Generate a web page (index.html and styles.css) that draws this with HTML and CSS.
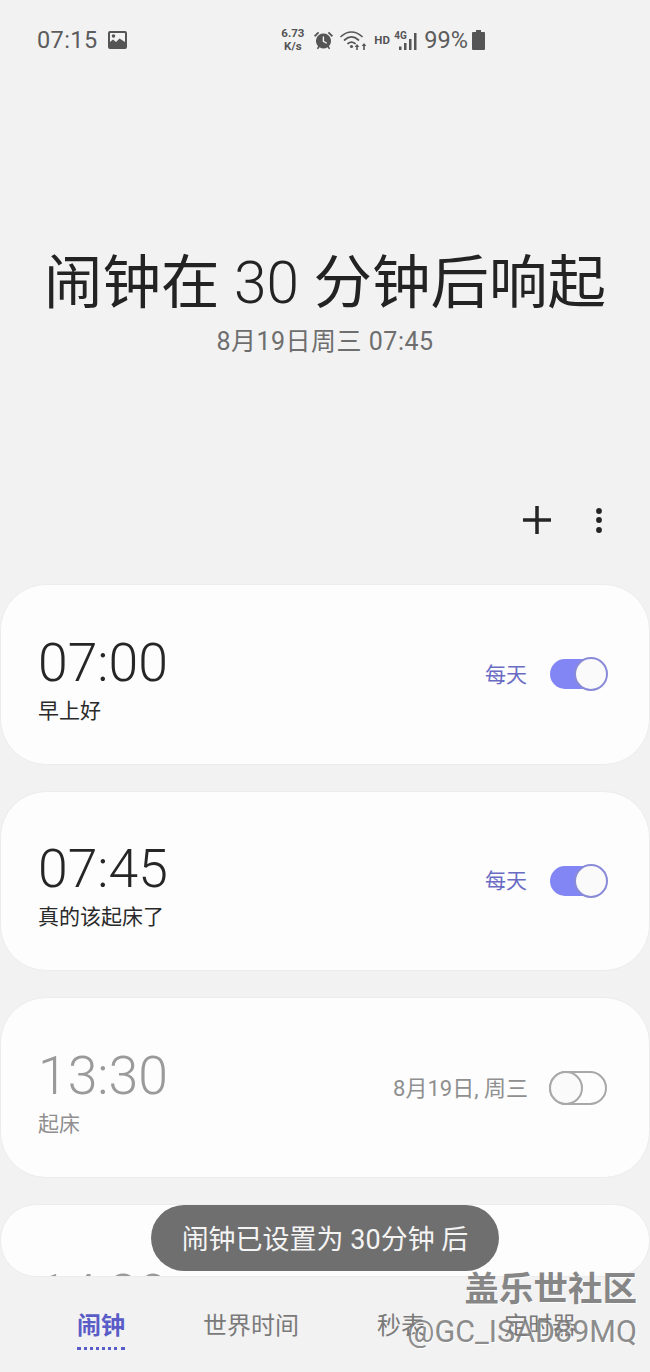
FILE: index.html
```html
<!DOCTYPE html>
<html lang="zh">
<head>
<meta charset="utf-8">
<title>闹钟</title>
<link rel="stylesheet" href="styles.css">
</head>
<body>
<div class="screen">
  <header class="status">
    <div class="status-left">
      <span class="clock">07:15</span>
      <svg class="ic-image" width="19" height="18" viewBox="0 0 19 18"><path fill="#555" fill-rule="evenodd" d="M2 0h15a2 2 0 0 1 2 2v14a2 2 0 0 1-2 2H2a2 2 0 0 1-2-2V2a2 2 0 0 1 2-2zm0 2v9l3-2.500 3 2.500 3.500-3.500L17 11V2H2zm3.500 1.200a1.800 1.800 0 1 1 0 3.600 1.800 1.800 0 0 1 0-3.600z"/></svg>
    </div>
    <div class="status-right">
      <span class="speed"><b>6.73</b><b>K/s</b></span>
      <svg class="ic-alarm" width="21" height="21" viewBox="0 0 21 21"><path fill="#555" fill-rule="evenodd" d="M10.500 3.500a7.500 7.500 0 0 1 5.400 12.700l1.300 2.300-1.300.8-1.400-2.100a7.500 7.500 0 0 1-8 0l-1.400 2.100-1.300-.8 1.300-2.300A7.500 7.500 0 0 1 10.500 3.500zM9.700 6.500v5.300l3.700 2 .7-1.100-3-1.700V6.500H9.700z"/><path fill="#555" d="M1 5.500 5 1.800l1.200 1.200L2.200 7zM20 5.500 16 1.800 14.800 3l4 4z"/></svg>
      <svg class="ic-wifi" width="27" height="21" viewBox="0 0 27 21"><g fill="none" stroke="#555" stroke-width="1.700" stroke-linecap="round"><path d="M1 6.500c6.500-6 14.500-6 21 0"/><path d="M4.500 10c4.500-4 9.500-4 14 0"/><path d="M8 13.500c2.500-2 4.500-2 7 0"/></g><circle cx="11.500" cy="16.500" r="1.600" fill="#555"/><path fill="#555" d="M17 14l2.300 3h-1.500v3h-1.600v-3h-1.500zM24 13l2.300 3h-1.500v4h-1.600v-4h-1.500z"/></svg>
      <span class="hd">HD</span>
      <span class="signal">
        <span class="net">4G</span>
        <svg width="18" height="21" viewBox="0 0 18 21"><path fill="#555" d="M0 16.500h2.500V20H0zM5 13h2.500v7H5zM10 9h2.500v11H10zM15 3h2.500v17H15z"/></svg>
      </span>
      <span class="battery-pct">99%</span>
      <svg class="ic-battery" width="13" height="20" viewBox="0 0 13 20"><path fill="#555" d="M4 0h5v2h3a1 1 0 0 1 1 1v16a1 1 0 0 1-1 1H1a1 1 0 0 1-1-1V3a1 1 0 0 1 1-1h3z"/></svg>
    </div>
  </header>

  <section class="hero">
    <h1 class="hero-title">闹钟在 <span class="hero-num">30</span> 分钟后响起</h1>
    <p class="hero-date">8月19日周三 07:45</p>
  </section>

  <div class="toolbar">
    <svg class="ic-plus" width="30" height="30" viewBox="0 0 30 30"><path d="M15 1v28M1 15h28" stroke="#252525" stroke-width="3.500" fill="none"/></svg>
    <svg class="ic-more" width="8" height="26" viewBox="0 0 8 26"><circle cx="4" cy="4" r="2.900" fill="#252525"/><circle cx="4" cy="13" r="2.900" fill="#252525"/><circle cx="4" cy="23" r="2.900" fill="#252525"/></svg>
  </div>

  <main class="list">
    <article class="card">
      <div class="info"><div class="time">07:00</div><div class="label">早上好</div></div>
      <span class="repeat">每天</span>
      <span class="switch on"><i class="knob"></i></span>
    </article>
    <article class="card">
      <div class="info"><div class="time">07:45</div><div class="label">真的该起床了</div></div>
      <span class="repeat">每天</span>
      <span class="switch on"><i class="knob"></i></span>
    </article>
    <article class="card off">
      <div class="info"><div class="time">13:30</div><div class="label">起床</div></div>
      <span class="repeat">8月19日, 周三</span>
      <span class="switch"><i class="knob"></i></span>
    </article>
    <article class="card off peek">
      <div class="info"><div class="time">14:30</div></div>
    </article>
  </main>

  <nav class="tabs">
    <span class="tab active">闹钟</span>
    <span class="tab">世界时间</span>
    <span class="tab">秒表</span>
    <span class="tab">定时器</span>
  </nav>

  <div class="toast">闹钟已设置为 30分钟 后</div>
  <div class="watermark"><div class="wm-cn">盖乐世社区</div><div class="wm-id">@GC_ISAD89MQ</div></div>
</div>
</body>
</html>
```
FILE: styles.css
```css
* { box-sizing: border-box; }
html, body { margin: 0; padding: 0; }
body { width: 650px; height: 1372px; overflow: hidden; background: #f2f2f2; font-family: Roboto, "Noto Sans CJK SC", sans-serif; }
.screen { position: relative; width: 650px; height: 1372px; display: flex; flex-direction: column; background: #f2f2f2; overflow: hidden; }

.status { height: 80px; flex: none; display: flex; justify-content: space-between; padding: 0 165px 0 37px; color: #555; }
.status-left { display: flex; align-items: center; gap: 10px; }
.clock { font-size: 23.500px; letter-spacing: .4px; color: #5c5c5c; line-height: 1; padding-top: 2px; }
.status-right { display: flex; align-items: center; }
.speed { display: flex; flex-direction: column; align-items: center; font-size: 11.500px; line-height: 13px; width: 25px; margin-right: 8px; }
.speed b { font-weight: 700; white-space: nowrap; }
.ic-wifi { margin-left: 6px; }
.hd { font-size: 11.500px; font-weight: 700; margin-left: 7px; width: 15px; white-space: nowrap; }
.signal { position: relative; display: block; width: 23px; height: 21px; margin-left: 5px; }
.signal svg { position: absolute; left: 5px; top: 0; }
.net { position: absolute; left: 0; top: 0; font-size: 10px; font-weight: 700; line-height: 11px; }
.battery-pct { font-size: 23.500px; line-height: 1; margin-left: 7px; color: #5c5c5c; padding-top: 2px; }
.ic-battery { margin-left: 4px; }

.hero { flex: none; height: 280px; padding-top: 163px; text-align: center; }
.hero-title { margin: 0 0 1px; font-size: 58.500px; font-weight: 400; line-height: 80px; color: #232323; white-space: nowrap; }
.hero-num { font-weight: 300; }
.hero-date { margin: 0; font-size: 25px; line-height: 36px; color: #6e6e6e; letter-spacing: .5px; }

.toolbar { flex: none; height: 224px; padding: 145px 47px 0 0; display: flex; justify-content: flex-end; align-items: flex-start; }
.ic-plus { margin-right: 43px; }
.ic-more { margin-top: 2px; }

.list { flex: none; height: 693px; display: flex; flex-direction: column; gap: 26px; overflow: hidden; }
.card { flex: none; height: 180.670px; background: #fdfdfd; border: 1px solid #ececec; border-radius: 46px; display: flex; align-items: center; padding: 0 42px 0 37px; }
.card.peek { height: 73px; border-radius: 36px; align-items: flex-start; overflow: hidden; padding-top: 57px; }
.info { flex: 1; display: flex; flex-direction: column; padding-top: 9px; }
.peek .info { padding-top: 0; }
.time { font-size: 53.500px; font-weight: 300; line-height: 63px; color: #262626; }
.label { font-size: 21px; line-height: 32px; margin-top: 1px; color: #2a2a2a; }
.repeat { font-size: 21px; color: #6a6cc4; margin: 0 23px 3px 0; white-space: nowrap; }

.switch { position: relative; display: block; width: 58px; height: 34px; border-radius: 17px; border: 2px solid #a8a8a8; }
.knob { position: absolute; top: -2px; left: -2px; width: 34px; height: 34px; border-radius: 50%; border: 2px solid #a8a8a8; background: #fafafa; }
.switch.on { background: #8286f5; border: 0; width: 57px; height: 30px; border-radius: 15px; }
.switch.on .knob { top: -2px; left: 24px; border-color: #8a8bd8; }
.card.off .time { color: #9a9a9a; }
.card.off .label, .card.off .repeat { color: #8f8f8f; }
.card.off .repeat { font-size: 22px; margin-right: 21px; }

.tabs { flex: 1; position: relative; display: block; }
.tab { position: absolute; top: 32px; font-size: 24px; line-height: 34px; color: #7a7a7a; white-space: nowrap; }
.tab:nth-child(1) { left: 77px; }
.tab:nth-child(2) { left: 203px; }
.tab:nth-child(3) { left: 377px; }
.tab:nth-child(4) { left: 504px; }
.tab.active { color: #5a5cc8; font-weight: 700; padding-bottom: 4px; border-bottom: 3px dotted #5a5cc8; }

.toast { position: absolute; left: 151px; top: 1205px; width: 348px; height: 66px; border-radius: 33px; background: #6f6f6f; color: #f4f4f4; font-size: 27px; line-height: 70px; text-align: center; white-space: nowrap; }

.watermark { position: absolute; right: 13px; top: 1266px; text-align: right; color: #7b7b7b; }
.wm-cn { font-size: 34.500px; line-height: 46px; font-weight: 700; text-shadow: 1px 1px 0 #fff; opacity: .9; }
.wm-id { font-size: 30.500px; line-height: 40px; opacity: .85; text-shadow: 1px 1px 0 #fff; }
```
